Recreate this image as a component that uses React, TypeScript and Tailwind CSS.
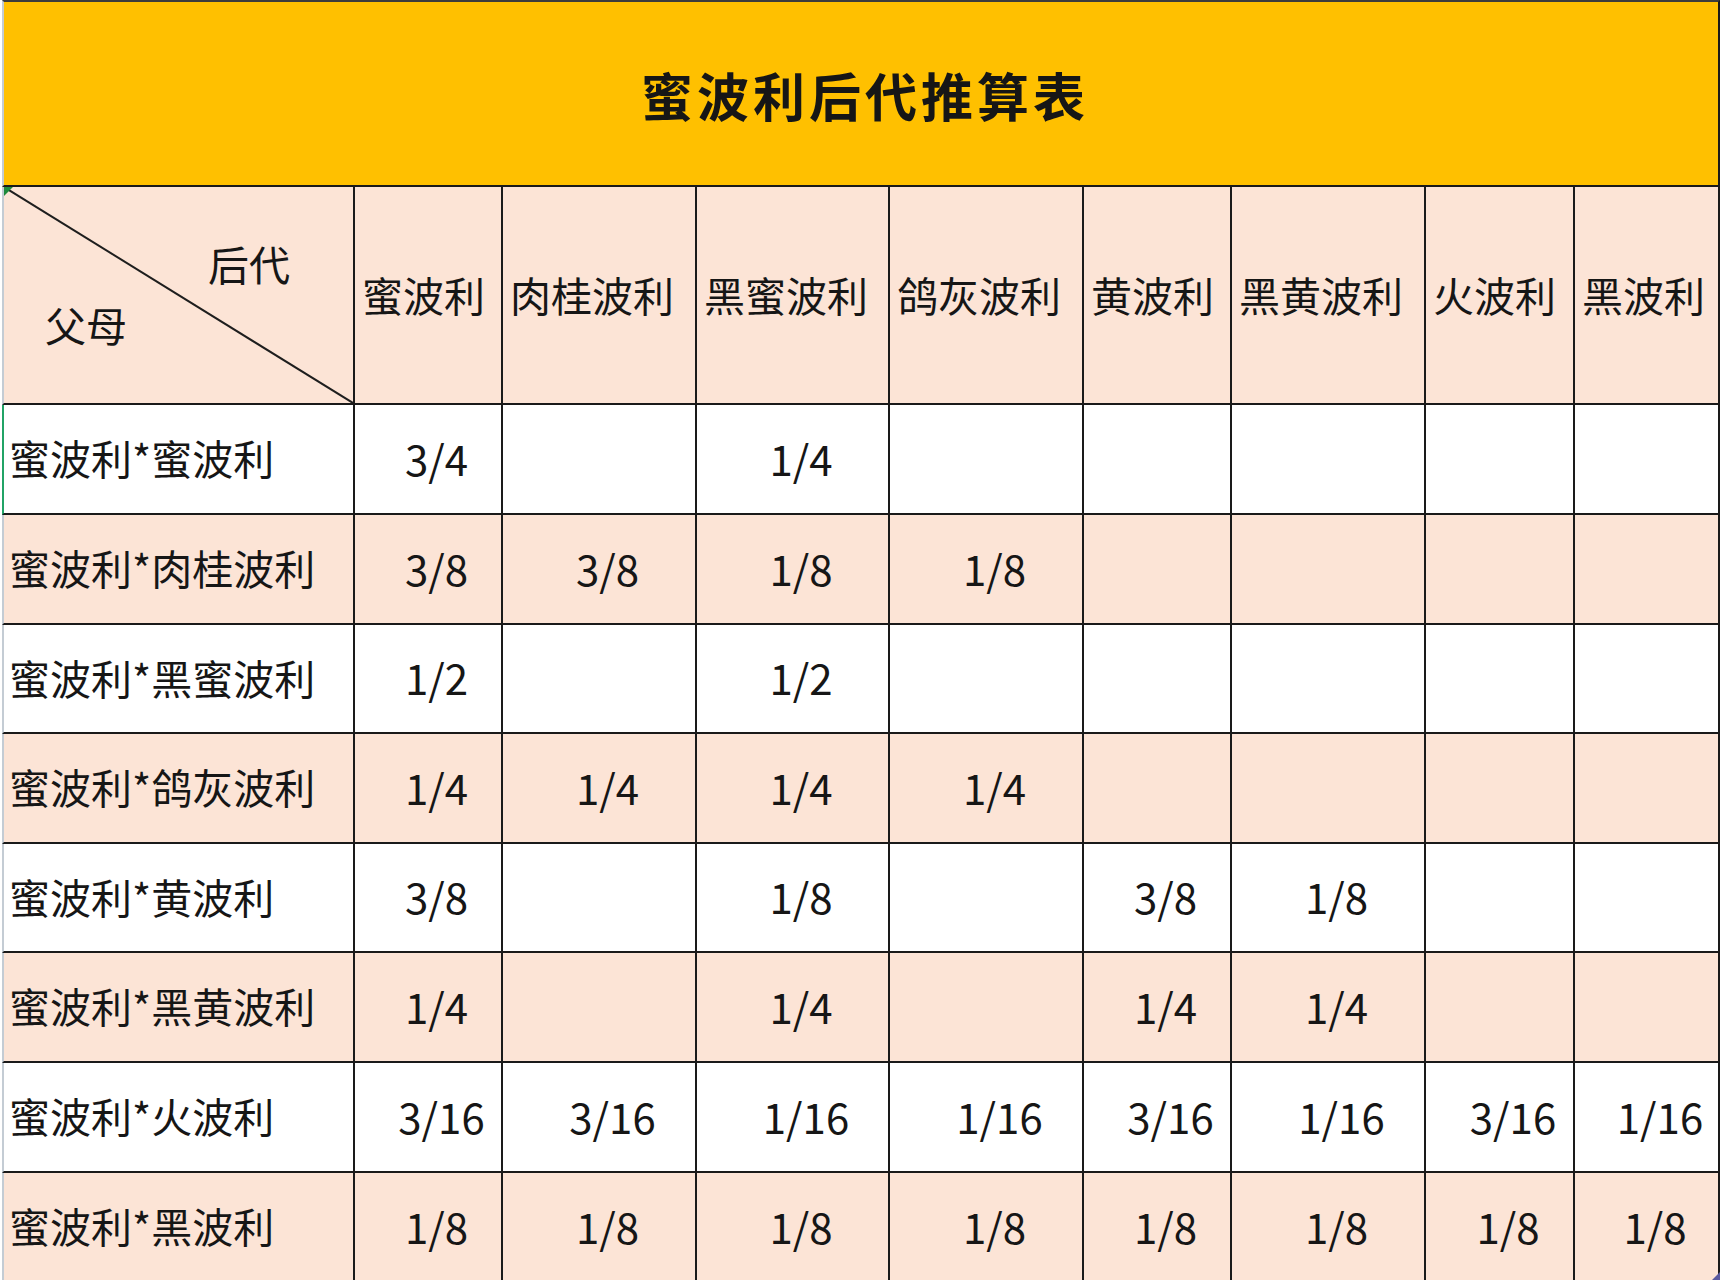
import React from "react";

const cols = ["蜜波利", "肉桂波利", "黑蜜波利", "鸽灰波利", "黄波利", "黑黄波利", "火波利", "黑波利"];

const rows: { label: string; vals: string[] }[] = [
  { label: "蜜波利*蜜波利", vals: ["3/4", "", "1/4", "", "", "", "", ""] },
  { label: "蜜波利*肉桂波利", vals: ["3/8", "3/8", "1/8", "1/8", "", "", "", ""] },
  { label: "蜜波利*黑蜜波利", vals: ["1/2", "", "1/2", "", "", "", "", ""] },
  { label: "蜜波利*鸽灰波利", vals: ["1/4", "1/4", "1/4", "1/4", "", "", "", ""] },
  { label: "蜜波利*黄波利", vals: ["3/8", "", "1/8", "", "3/8", "1/8", "", ""] },
  { label: "蜜波利*黑黄波利", vals: ["1/4", "", "1/4", "", "1/4", "1/4", "", ""] },
  { label: "蜜波利*火波利", vals: ["3/16", "3/16", "1/16", "1/16", "3/16", "1/16", "3/16", "1/16"] },
  { label: "蜜波利*黑波利", vals: ["1/8", "1/8", "1/8", "1/8", "1/8", "1/8", "1/8", "1/8"] },
];

export default function App() {
  return (
    <div className="relative w-[1724px] h-[1280px] overflow-hidden bg-white text-[#161616] font-['Noto_Sans_CJK_SC','Microsoft_YaHei',sans-serif]">
      <div className="ml-[2px] w-[1718px]">
        {/* title band */}
        <div className="h-[187px] bg-[#FFC000] border-t-2 border-t-[#3c3c3c] border-b-2 border-b-[#1a1a1a] border-l-2 border-l-[#c4ccd4] border-r-2 border-r-[#1a1a1a] flex items-center justify-center pt-[2px] pl-[8px]">
          <span className="text-[52px] font-bold tracking-[4px] leading-none">蜜波利后代推算表</span>
        </div>

        {/* table */}
        <div className="grid grid-cols-[353px_148px_194px_193px_194px_148px_194px_149px_145px] grid-rows-[218px_110px_110px_109px_110px_109px_110px_110px_110px]">
          {/* diagonal header */}
          <div className="relative bg-[#FCE4D6] border-l-2 border-l-[#c4ccd4] border-r-2 border-b-2 border-[#1a1a1a] text-[41px] leading-[41px] pt-[56px]">
            <svg className="absolute inset-0 w-full h-full" viewBox="0 0 351 216" preserveAspectRatio="none">
              <line x1="0" y1="0" x2="351" y2="216" stroke="#1e1e1e" strokeWidth="2" />
              <polygon points="0,0 9,0 0,9" fill="#1f8a3c" />
            </svg>
            <div className="pl-[204px]">后代</div>
            <div className="pl-[41px] mt-[20px]">父母</div>
          </div>
          {cols.map((c) => (
            <div
              key={c}
              className="bg-[#FCE4D6] border-r-2 border-b-2 border-[#1a1a1a] flex items-center pl-[7px] pb-[2px] text-[41px] leading-none whitespace-nowrap overflow-hidden"
            >
              {c}
            </div>
          ))}

          {rows.map((r, i) => {
            const bg = i % 2 === 1 ? "bg-[#FCE4D6]" : "bg-white";
            const leftBorder = i === 0 ? "border-l-[#21a366]" : "border-l-[#c4ccd4]";
            return (
              <React.Fragment key={r.label}>
                <div
                  className={`${bg} border-l-2 ${leftBorder} border-r-2 border-b-2 border-r-[#1a1a1a] border-b-[#1a1a1a] flex items-center pl-[5px] pb-[3px] text-[41px] leading-none whitespace-nowrap`}
                >
                  {r.label}
                </div>
                {r.vals.map((v, j) => (
                  <div
                    key={j}
                    className={`${bg} border-r-2 border-b-2 border-[#1a1a1a] flex items-center justify-center pb-[3px] text-[42px] leading-none ${
                      v.length > 3 ? "pl-[27px]" : "pl-[17px]"
                    }`}
                  >
                    {v}
                  </div>
                ))}
              </React.Fragment>
            );
          })}
        </div>
      </div>
      <svg className="absolute right-[4px] bottom-0 w-[8px] h-[8px]" viewBox="0 0 8 8">
        <polygon points="8,0 8,8 0,8" fill="#5a5aa0" />
      </svg>
    </div>
  );
}
